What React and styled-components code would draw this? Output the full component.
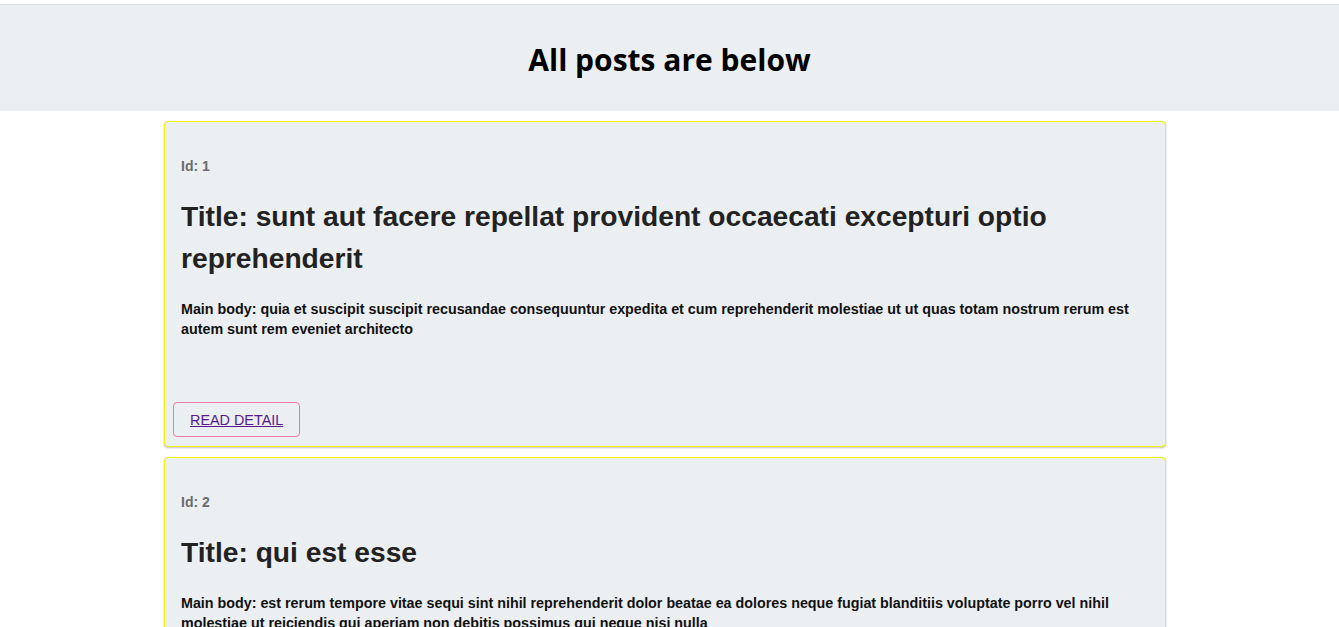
import styled, { createGlobalStyle } from "styled-components";

const GlobalStyle = createGlobalStyle`
  body {
    margin: 0;
    background: #fff;
    font-family: "Liberation Sans", Arial, sans-serif;
  }
`;

const posts = [
  {
    id: 1,
    title: "sunt aut facere repellat provident occaecati excepturi optio reprehenderit",
    body: "quia et suscipit suscipit recusandae consequuntur expedita et cum reprehenderit molestiae ut ut quas totam nostrum rerum est autem sunt rem eveniet architecto",
  },
  {
    id: 2,
    title: "qui est esse",
    body: "est rerum tempore vitae sequi sint nihil reprehenderit dolor beatae ea dolores neque fugiat blanditiis voluptate porro vel nihil molestiae ut reiciendis qui aperiam non debitis possimus qui neque nisi nulla",
  },
];

const Page = styled.div`
  padding-top: 4px;
`;

const Header = styled.header`
  height: 107px;
  border-top: 1px solid #dcdde0;
  background: #eceff1;
  display: flex;
  align-items: center;
  justify-content: center;
  padding-top: 2px;
  box-sizing: border-box;
`;

const Heading = styled.h1`
  margin: 0;
  font-family: "Open Sans", "Noto Sans", sans-serif;
  font-size: 30px;
  font-weight: 700;
  color: #000;
`;

const Main = styled.main`
  padding-right: 9px;
`;

const List = styled.div`
  width: 1002px;
  margin: 10px auto 0;
  display: flex;
  flex-direction: column;
  gap: 10px;
`;

const Card = styled.article`
  background: #eceff1;
  border: 1px solid #f5f500;
  border-radius: 4px;
  box-shadow: 0 1px 2px rgba(0, 0, 0, 0.25);
  padding: 36px 8px 9px;
`;

const Content = styled.div`
  padding: 0 8px;
`;

const Id = styled.p`
  margin: 0;
  font-size: 14px;
  line-height: 16px;
  font-weight: 700;
  color: #6b6b6b;
`;

const Title = styled.h2`
  margin: 21px 0 20px;
  font-size: 28.2px;
  line-height: 42px;
  font-weight: 700;
  color: #222;
`;

const Body = styled.p`
  margin: 0;
  font-size: 14.3px;
  line-height: 20px;
  font-weight: 700;
  color: #111;
`;

const Button = styled.button`
  margin-top: 63px;
  height: 35px;
  padding: 0 16px;
  background: transparent;
  border: 1px solid #e97aa6;
  border-radius: 4px;
  font-family: "Liberation Sans", Arial, sans-serif;
  font-size: 14.4px;
  color: #551a8b;
  text-decoration: underline;
  cursor: pointer;
`;

const PostCard = ({ post }) => (
  <Card>
    <Content>
      <Id>Id: {post.id}</Id>
      <Title>Title: {post.title}</Title>
      <Body>Main body: {post.body}</Body>
    </Content>
    <Button>READ DETAIL</Button>
  </Card>
);

const App = () => (
  <Page>
    <GlobalStyle />
    <Header>
      <Heading>All posts are below</Heading>
    </Header>
    <Main>
      <List>
        {posts.map(post => (
          <PostCard key={post.id} post={post} />
        ))}
      </List>
    </Main>
  </Page>
);

export default App;
